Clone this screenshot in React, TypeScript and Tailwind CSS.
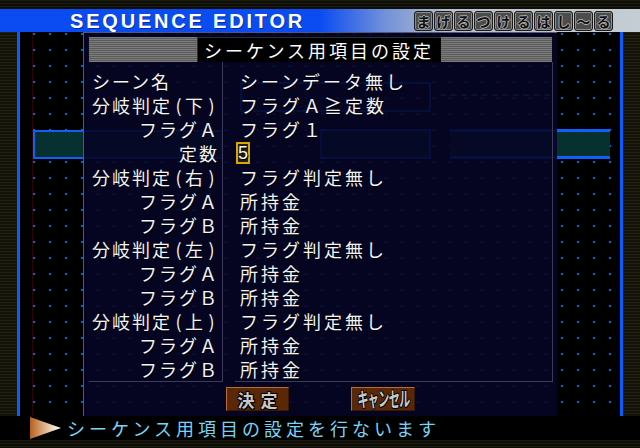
import React from "react";

const rows: { label: string; value: string; head?: boolean }[] = [
  { label: "シーン名", value: "シーンデータ無し", head: true },
  { label: "分岐判定(下)", value: "フラグＡ≧定数", head: true },
  { label: "フラグＡ", value: "フラグ１" },
  { label: "定数", value: "__5" },
  { label: "分岐判定(右)", value: "フラグ判定無し", head: true },
  { label: "フラグＡ", value: "所持金" },
  { label: "フラグＢ", value: "所持金" },
  { label: "分岐判定(左)", value: "フラグ判定無し", head: true },
  { label: "フラグＡ", value: "所持金" },
  { label: "フラグＢ", value: "所持金" },
  { label: "分岐判定(上)", value: "フラグ判定無し", head: true },
  { label: "フラグＡ", value: "所持金" },
  { label: "フラグＢ", value: "所持金" },
];

const chips = ["ま", "げ", "る", "つ", "け", "る", "は", "し", "〜", "る"];

const jp = "font-['Noto_Sans_CJK_JP','Noto_Sans',sans-serif]";

function Label({ text }: { text: string }) {
  const parts = text.split(/([()])/);
  return (
    <>
      {parts.map((p, i) =>
        p === "(" || p === ")" ? (
          <span key={i} className="inline-block w-[13px] text-center tracking-normal">
            {p}
          </span>
        ) : (
          <span key={i}>{p}</span>
        )
      )}
    </>
  );
}

export default function App() {
  return (
    <div className={`w-[640px] h-[448px] bg-black flex flex-col overflow-hidden ${jp}`}>
      {/* top strip */}
      <div className="h-[9px] bg-[repeating-linear-gradient(180deg,#1c1c0e_0px,#1c1c0e_1px,#0e0e08_1px,#0e0e08_3px)]" />
      {/* header */}
      <div className="h-[23px] flex items-center bg-[linear-gradient(90deg,#0a4cf2_0%,#0a4cf2_50%,#7090d8_60%,#b8c0cc_70%,#c4ccd4_100%)]">
        <div className="ml-[70px] font-['Liberation_Sans',sans-serif] font-bold text-[20px] leading-none tracking-[2.8px] text-white [text-shadow:1px_1px_0_#0030a0]">
          SEQUENCE EDITOR
        </div>
        <div className="ml-auto mr-[27px] flex gap-[1px]">
          {chips.map((c, i) => (
            <div
              key={i}
              className="w-[19px] h-[20px] rounded-[3px] border border-[#1a1a1a] bg-[#4c4c4c] shadow-[inset_0_0_0_1px_#8c8c8c] flex items-center justify-center text-[14px] font-bold leading-none text-[#111] [text-shadow:1px_0_0_#aaa,-1px_0_0_#aaa,0_1px_0_#aaa,0_-1px_0_#aaa]"
            >
              {c}
            </div>
          ))}
        </div>
      </div>

      {/* main area */}
      <div className="h-[384px] flex">
        <div className="w-[17px] bg-[repeating-linear-gradient(180deg,#22220e_0px,#22220e_1px,#12120a_1px,#12120a_3px)]" />
        <div className="w-[3px] bg-[#0a5cff]" />
        <div className="relative w-[600px] bg-black bg-[radial-gradient(circle,#0a64c8_1.3px,transparent_1.6px)] bg-[length:16px_16px] bg-[position:6px_-6px]">
          {/* faint red line */}
          <div className="absolute left-[12px] top-0 h-full w-px bg-[#2a0606]" />
          {/* background canvas boxes */}
          <div className="absolute left-[13px] top-[98px] w-[190px] h-[29px] border-2 border-[#0e60f8] bg-[#073030]" />
          <div className="absolute left-[300px] top-[97px] w-[111px] h-[30px] border-2 border-[#0e60f8] bg-[#073030]" />
          <div className="absolute left-[430px] top-[97px] w-[160px] h-[30px] border-y-[3px] border-[#0e60f8] bg-[#073030]" />
          <div className="absolute left-[220px] top-[50px] w-[191px] h-[30px] border-2 border-[#0e60f8]" />
          <div className="absolute left-[420px] top-[62px] w-[110px] border-t-2 border-dashed border-[#1a8070]" />

          {/* dialog */}
          <div className="absolute left-[63px] top-0 w-[474px] h-[384px] bg-[#060626]/[0.9] border-l border-t border-[#585874] flex flex-col pl-[5px] pr-[3px] pt-[4px]">
            {/* title bar */}
            <div className="h-[25px] w-[463px] flex justify-center bg-[repeating-linear-gradient(180deg,#7c7c7c_0px,#7c7c7c_1px,#5a5a5a_1px,#5a5a5a_2px)]">
              <div className="ml-[-4px] h-[25px] w-[244px] bg-black border-l border-t border-[#303030] flex items-center justify-center text-[18px] leading-none tracking-[3px] text-white">
                シーケンス用項目の設定
              </div>
            </div>
            {/* table */}
            <div className="flex h-[320px]">
              <div className="w-[134px] border-r border-b border-[#3c3c5a] pt-[7px] pl-[3px] pr-[3px]">
                {rows.map((r, i) => (
                  <div
                    key={i}
                    className={`h-[24px] flex items-center ${r.head ? "justify-start" : "justify-end"} whitespace-nowrap text-[18px] leading-none tracking-[2px] text-[#f4f4f4] [text-shadow:1px_1px_0_#000]`}
                  >
                    <Label text={r.label} />
                  </div>
                ))}
              </div>
              <div className="ml-[12px] w-[318px] border-r border-b border-[#3c3c5a] pt-[7px] pl-[5px]">
                {rows.map((r, i) => (
                  <div
                    key={i}
                    className="h-[24px] flex items-center text-[18px] leading-none tracking-[3px] text-[#f4f4f4] [text-shadow:1px_1px_0_#000]"
                  >
                    {r.value === "__5" ? (
                      <div className="ml-[-4px] w-[14px] h-[22px] border-2 border-[#d8a800] bg-[#201c08] flex items-center justify-center text-[18px] tracking-normal font-['Liberation_Sans',sans-serif]">
                        5
                      </div>
                    ) : (
                      r.value
                    )}
                  </div>
                ))}
              </div>
            </div>
            {/* buttons */}
            <div className="flex mt-[5px] h-[24px]">
              <div className="ml-[137px] w-[63px] h-[24px] bg-[#5a2806] border border-[#b86c34] border-b-[#3a1802] border-r-[#3a1802] flex items-center justify-center text-[17px] font-bold leading-none tracking-[6px] pl-[6px] text-[#c8c8c8] [text-shadow:1px_1px_0_#000,-1px_-1px_0_#000,1px_-1px_0_#000,-1px_1px_0_#000]">
                決定
              </div>
              <div className="ml-[62px] w-[64px] h-[24px] bg-[#5a2806] border border-[#b86c34] border-b-[#3a1802] border-r-[#3a1802] flex items-center justify-center">
                <span className="inline-block scale-x-[0.55] whitespace-nowrap text-[20px] font-bold leading-none tracking-[-1px] -mx-[20px] text-[#c8c8c8] [text-shadow:1px_1px_0_#000,-1px_-1px_0_#000,1px_-1px_0_#000,-1px_1px_0_#000]">
                  キャンセル
                </span>
              </div>
            </div>
          </div>
        </div>
        <div className="w-[3px] bg-[#0a5cff]" />
        <div className="w-[17px] bg-[repeating-linear-gradient(180deg,#22220e_0px,#22220e_1px,#12120a_1px,#12120a_3px)]" />
      </div>

      {/* bottom message bar */}
      <div className="h-[24px] bg-black flex items-center">
        <svg width="31" height="22" viewBox="0 0 31 22" className="ml-[30px]">
          <defs>
            <linearGradient id="tri" x1="0" y1="0" x2="1" y2="0">
              <stop offset="0" stopColor="#b8601c" />
              <stop offset="0.6" stopColor="#e8c8a8" />
              <stop offset="1" stopColor="#ffffff" />
            </linearGradient>
          </defs>
          <polygon points="0,0 31,11 0,22" fill="url(#tri)" />
        </svg>
        <div className="ml-[6px] text-[18px] leading-none tracking-[4px] text-[#78d4f4]">
          シーケンス用項目の設定を行ないます
        </div>
      </div>
      {/* bottom strip */}
      <div className="h-[8px] bg-[repeating-linear-gradient(180deg,#1c1c0e_0px,#1c1c0e_1px,#0e0e08_1px,#0e0e08_3px)]" />
    </div>
  );
}
